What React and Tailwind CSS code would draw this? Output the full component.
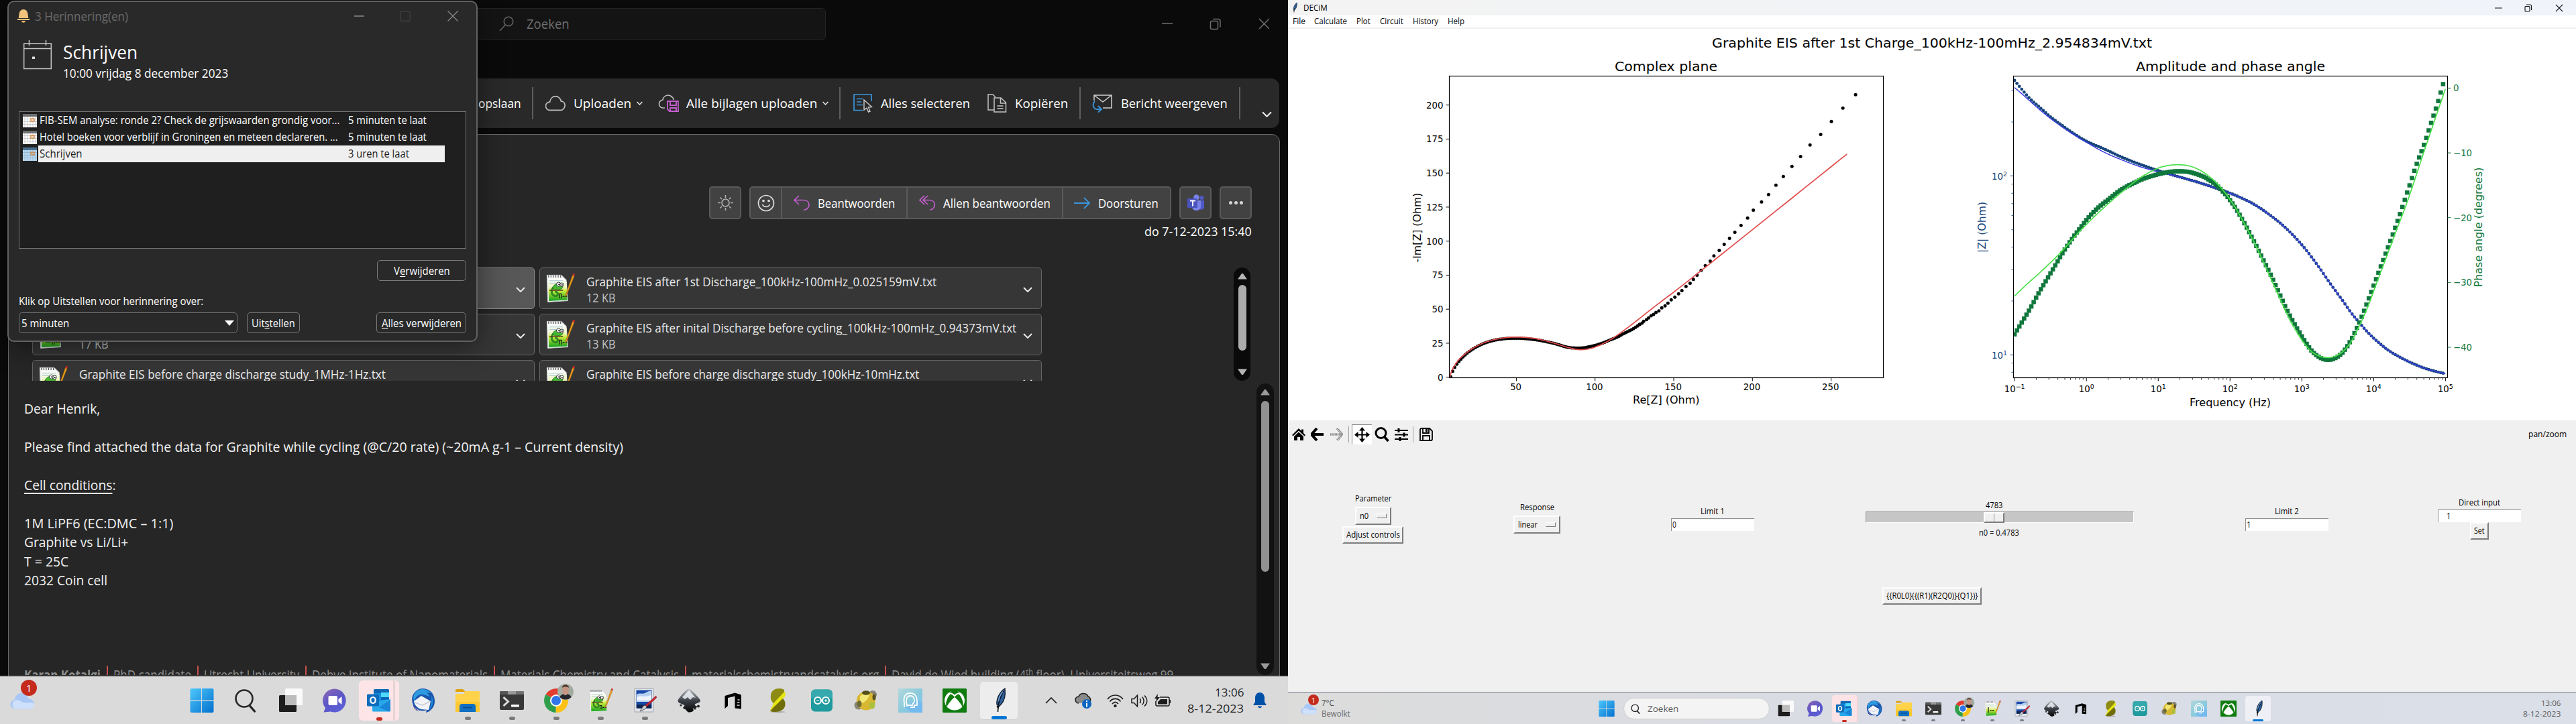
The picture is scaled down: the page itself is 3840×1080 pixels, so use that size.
import React, { useLayoutEffect, useRef } from "react";

/* Single line of text, condensed or widened to the given pixel width. */
function T({ w, className = "", children }) {
  const outer = useRef(null);
  const inner = useRef(null);
  useLayoutEffect(() => {
    const el = inner.current;
    el.style.transform = "none";
    const natural = el.offsetWidth;
    outer.current.style.width = w + "px";
    if (natural) el.style.transform = `scaleX(${w / natural})`;
  }, [w]);
  return (
    <span ref={outer} className={"inline-block shrink-0 whitespace-nowrap " + className}>
      <span ref={inner} className="inline-block origin-left">{children}</span>
    </span>
  );
}

/* ---------- curves ---------- */
function smooth(points, perSegment = 12) {
  const out = [];
  for (let i = 0; i < points.length - 1; i++) {
    const p0 = points[Math.max(0, i - 1)];
    const p1 = points[i];
    const p2 = points[i + 1];
    const p3 = points[Math.min(points.length - 1, i + 2)];
    for (let k = 0; k < perSegment; k++) {
      const t = k / perSegment;
      out.push([0, 1].map((d) =>
        0.5 * (2 * p1[d] + (p2[d] - p0[d]) * t + (2 * p0[d] - 5 * p1[d] + 4 * p2[d] - p3[d]) * t * t + (3 * p1[d] - p0[d] - 3 * p2[d] + p3[d]) * t * t * t)
      ));
    }
  }
  out.push(points[points.length - 1]);
  return out;
}
const SX = 960 / 1568;
const SY = 640 / 1568;
const place = (pts, ox) => pts.map(([x, y]) => [ox + x * SX, y * SY]);
const toPath = (pts) => "M" + pts.map(([x, y]) => x.toFixed(1) + " " + y.toFixed(1)).join("L");
function resampleX(pts, step) {
  const out = [];
  let i = 0;
  for (let x = pts[0][0]; x <= pts[pts.length - 1][0] + 0.01; x += step) {
    while (i < pts.length - 2 && pts[i + 1][0] < x) i++;
    const [x0, y0] = pts[i];
    const [x1, y1] = pts[i + 1];
    out.push([x, y0 + ((y1 - y0) * (x - x0)) / (x1 - x0 || 1)]);
  }
  return out;
}

const NYQ_SPARSE = [[1382,346],[1351,395],[1323,444],[1297,491],[1271,530],[1248,572],[1227,608],[1206,645],[1188,677],[1170,711],[1153,738],[1133,768],[1119,797],[1103,824],[1088,849],[1075,871],[1062,893],[1050,915],[1037,935],[1028,954],[1016,971],[1006,988],[996,1006],[987,1021],[979,1035],[969,1047],[959,1062],[951,1074],[942,1086],[933,1096],[925,1108],[918,1118],[910,1125],[903,1136],[896,1142],[890,1149],[884,1154],[878,1162],[873,1168],[866,1174],[862,1181],[856,1186]];
const NYQ_DENSE = [[396,1377],[400,1360],[408,1338],[420,1314],[440,1286],[465,1263],[490,1248],[520,1239],[556,1236],[590,1239],[620,1246],[650,1256],[680,1269],[700,1272],[720,1271],[740,1265],[760,1257],[780,1245],[800,1233],[820,1217],[840,1202],[856,1186]];
const NYQ_FIT = [[394,1380],[400,1350],[415,1316],[430,1295],[450,1273],[475,1254],[500,1242],[530,1234],[556,1232],[590,1235],[620,1243],[650,1255],[680,1269],[700,1276],[715,1278],[735,1274],[755,1264],[775,1250],[795,1232],[830,1194],[900,1112],[1000,996],[1361,563]];
const Z_TAIL = [[620,654],[660,672],[700,692],[726,706],[760,728],[790,752],[820,783],[850,818],[880,861],[910,912],[940,972],[970,1037],[1000,1099],[1020,1142],[1041,1180],[1060,1213],[1080,1242],[1110,1279],[1140,1306],[1170,1328],[1200,1346],[1225,1357],[1250,1366]];
const Z_DATA = [[201,294],[219,327],[240,363],[260,389],[285,423],[310,451],[340,483],[376,516],[420,545],[460,573],[500,597],[540,618],[580,637],...Z_TAIL];
const Z_FIT = [[201,320],[225,351],[260,398],[300,446],[340,487],[376,520],[420,557],[460,583],[500,606],[540,624],[580,639],...Z_TAIL];
const PH_DATA = [[201,1222],[220,1175],[240,1125],[260,1070],[280,1020],[300,970],[320,920],[340,875],[360,835],[380,797],[400,765],[430,728],[460,694],[490,670],[515,653],[550,637],[580,628],[605,626],[630,630],[660,645],[685,668],[705,695],[725,730],[745,775],[765,828],[785,885],[805,945],[825,1005],[845,1070],[865,1135],[885,1190],[905,1240],[925,1283],[945,1307],[962,1315],[980,1310],[1000,1288],[1020,1243],[1040,1180],[1060,1105],[1080,1025],[1100,945],[1120,865],[1140,780],[1160,690],[1180,600],[1200,520],[1215,450],[1232,373],[1243,314],[1250,283]];
const PH_FIT = [[201,1082],[230,1040],[260,1000],[300,943],[330,895],[360,845],[400,785],[440,730],[480,680],[515,642],[550,615],[575,605],[598,602],[625,606],[650,620],[675,645],[700,680],[720,718],[745,775],[785,888],[825,1018],[865,1150],[885,1205],[905,1252],[925,1286],[945,1302],[962,1307],[980,1303],[1000,1285],[1020,1250],[1040,1192],[1060,1125],[1080,1045],[1100,965],[1130,845],[1160,725],[1200,545],[1250,325]];

const nyqDense = place(resampleX(smooth(NYQ_DENSE), 5), 1920);
const nyqSparse = place(NYQ_SPARSE, 1920);
const zDots = place(resampleX(smooth(Z_DATA), 5.829), 2880);
const phDots = place(resampleX(smooth(PH_DATA), 5.829), 2880);

function Charts() {
  const decX = (d) => 3003.2 + (d + 1) * 107.03;
  const minorX = [];
  for (let d = -1; d < 5; d++) for (let m = 2; m < 10; m++) minorX.push(decX(d + Math.log10(m)));
  const zy = (v) => 529.4 - (Math.log10(v) - 1) * 267;
  return (
    <svg width="1920" height="584" viewBox="1920 43 1920 584" className="block shrink-0 bg-white" fontFamily="DejaVu Sans, sans-serif">
      <text x="2552" y="71" fontSize="20" textLength="656" lengthAdjust="spacingAndGlyphs">Graphite EIS after 1st Charge_100kHz-100mHz_2.954834mV.txt</text>
      <text x="2407" y="106" fontSize="20" textLength="153" lengthAdjust="spacingAndGlyphs">Complex plane</text>
      <text x="3184" y="106" fontSize="20" textLength="282" lengthAdjust="spacingAndGlyphs">Amplitude and phase angle</text>

      <clipPath id="axL"><rect x="2160" y="113" width="648" height="451" /></clipPath>
      <g clipPath="url(#axL)">
        {[...nyqDense, ...nyqSparse].map(([x, y], i) => <circle key={i} cx={x} cy={y} r="2.5" fill="#000" />)}
        <path d={toPath(place(smooth(NYQ_FIT), 1920))} fill="none" stroke="#e24a4a" strokeWidth="1.7" />
      </g>
      <rect x="2160.5" y="113.5" width="647" height="450" fill="none" stroke="#000" strokeWidth="1.2" />
      {[50, 100, 150, 200, 250].map((v, i) => (
        <g key={v}>
          <path d={`M${2260.4 + i * 117.3} 563.5v5`} stroke="#000" />
          <text x={2259.6 + i * 117.3} y="582" fontSize="13.3" textAnchor="middle">{v}</text>
        </g>
      ))}
      {[0, 25, 50, 75, 100, 125, 150, 175, 200].map((v, i) => (
        <g key={v}>
          <path d={`M2160.5 ${562.7 - i * 50.75}h-5`} stroke="#000" />
          <text x="2151.5" y={567.7 - i * 50.75} fontSize="13.3" textAnchor="end">{v}</text>
        </g>
      ))}
      <text x="2434" y="602" fontSize="16" textLength="99.5" lengthAdjust="spacingAndGlyphs">Re[Z] (Ohm)</text>
      <text transform="translate(2117.5 391.5) rotate(-90)" fontSize="16" textLength="104" lengthAdjust="spacingAndGlyphs">-Im[Z] (Ohm)</text>

      <clipPath id="axR"><rect x="3001" y="113" width="648" height="451" /></clipPath>
      <g clipPath="url(#axR)">
        {zDots.map(([x, y], i) => <circle key={i} cx={x} cy={y} r="2.4" fill="#17457c" />)}
        <path d={toPath(place(smooth(Z_FIT), 2880))} fill="none" stroke="#3c3ce0" strokeWidth="1.5" />
        {phDots.map(([x, y], i) => <rect key={i} x={x - 3.3} y={y - 3.2} width="6.6" height="6.4" fill="#10773c" />)}
        <path d={toPath(place(smooth(PH_FIT), 2880))} fill="none" stroke="#4be04b" strokeWidth="1.7" />
      </g>
      <rect x="3001.5" y="113.5" width="647" height="450" fill="none" stroke="#000" strokeWidth="1.2" />
      {minorX.map((x, i) => <path key={i} d={`M${x} 563.5v3`} stroke="#000" strokeWidth="0.8" />)}
      {[["−1", -1], ["0", 0], ["1", 1], ["2", 2], ["3", 3], ["4", 4], ["5", 5]].map(([s, d]) => (
        <g key={s}>
          <path d={`M${decX(d)} 563.5v5`} stroke="#000" />
          <text x={decX(d)} y="585" fontSize="13.3" textAnchor="middle">10<tspan dy="-5" fontSize="9.5">{s}</tspan></text>
        </g>
      ))}
      {[8, 9, 20, 30, 40, 50, 60, 70, 80, 90, 200, 300].map((v) => <path key={v} d={`M3001.5 ${zy(v)}h-3`} stroke="#17457c" strokeWidth="0.9" />)}
      {[[100, "2"], [10, "1"]].map(([v, s]) => (
        <g key={s}>
          <path d={`M3001.5 ${zy(v)}h-5`} stroke="#17457c" />
          <text x="2992" y={zy(v) + 6} fontSize="13.3" textAnchor="end" fill="#17457c">10<tspan dy="-5" fontSize="9.5">{s}</tspan></text>
        </g>
      ))}
      {[0, -10, -20, -30, -40].map((v, i) => (
        <g key={v}>
          <path d={`M3648.5 ${131.4 + i * 96.65}h5`} stroke="#10773c" />
          <text x="3657" y={136.4 + i * 96.65} fontSize="13.3" fill="#10773c">{v < 0 ? "−" + -v : v}</text>
        </g>
      ))}
      <text x="3264" y="606" fontSize="16" textLength="121" lengthAdjust="spacingAndGlyphs">Frequency (Hz)</text>
      <text transform="translate(2960 377) rotate(-90)" fontSize="16" textLength="76" lengthAdjust="spacingAndGlyphs" fill="#17457c">|Z| (Ohm)</text>
      <text transform="translate(3700 428.5) rotate(-90)" fontSize="16" textLength="179" lengthAdjust="spacingAndGlyphs" fill="#10773c">Phase angle (degrees)</text>
    </svg>
  );
}

/* ---------- taskbar icons ---------- */
const Svg = ({ s = 36, children, vb = "0 0 36 36" }) => (
  <svg width={s} height={s} viewBox={vb} className="block shrink-0 overflow-visible">{children}</svg>
);
const StartIcon = ({ s }) => (
  <Svg s={s}>
    <defs><linearGradient id="win" x1="0" y1="0" x2="1" y2="1"><stop offset="0" stopColor="#4cc8fb" /><stop offset="1" stopColor="#0470cf" /></linearGradient></defs>
    <path d="M2.500 0H17v17.300H.5V2a2 2 0 0 1 2-2zM18 0h15.500a2 2 0 0 1 2 2v15.300H18zM.5 18.500H17V36H2.500a2 2 0 0 1-2-2zM18 18.500h17.500V34a2 2 0 0 1-2 2H18z" fill="url(#win)" />
  </Svg>
);
const SearchIcon = ({ s, w = 2.6 }) => (
  <Svg s={s}><circle cx="15" cy="15" r="12.5" fill="none" stroke="#262626" strokeWidth={w} /><path d="M23 25.500l7.500 8.500" stroke="#262626" strokeWidth={w + 0.8} strokeLinecap="round" /></Svg>
);
const TaskView = ({ s }) => (
  <Svg s={s}><rect x="1" y="10" width="26" height="25" rx="1.500" fill="#1c1c1c" /><rect x="10" y="0" width="26" height="25" rx="1.500" fill="#fafafa" /><rect x="10" y="10" width="17" height="15" fill="#bcbcbc" /></Svg>
);
const ChatIcon = ({ s }) => (
  <Svg s={s}>
    <defs><linearGradient id="chat" x1="0" y1="0" x2="0.600" y2="1"><stop offset="0" stopColor="#8e68b4" /><stop offset=".6" stopColor="#5a56c8" /><stop offset="1" stopColor="#5b5fd6" /></linearGradient></defs>
    <path d="M18 .5a17 17.500 0 1 1-6 34L1.500 35.500 4 29A17.500 17.500 0 0 1 18 .5z" fill="url(#chat)" />
    <rect x="8.500" y="11" width="13.500" height="14" rx="2" fill="#fff" /><path d="M23.500 16l5-4v12l-5-4z" fill="#fff" />
  </Svg>
);
const OutlookIcon = ({ s }) => (
  <Svg s={s}>
    <rect x="10" y="1" width="23" height="18" rx="1.500" fill="#1066b5" /><path d="M21 6h12v7H21z" fill="#50d9ff" /><path d="M10 7h11v10H10z" fill="#1490df" /><path d="M21 13h12v6H21z" fill="#0364b8" />
    <path d="M8 19l27-3v17a1.500 1.500 0 0 1-1.500 1.500H9.500A1.500 1.500 0 0 1 8 33z" fill="#28a8ea" /><path d="M35 17L18 28l15 6.500 2-1.500z" fill="#1a86d9" />
    <rect x="0" y="8.500" width="18" height="18" rx="1.500" fill="#0f6cbd" /><ellipse cx="9" cy="17.500" rx="3.700" ry="4.500" fill="none" stroke="#fff" strokeWidth="2.200" />
  </Svg>
);
const Thunderbird = ({ s }) => (
  <Svg s={s}>
    <path d="M7 4C14-3 27 0 32 8c5 8 4 20-4 25-2 2-4 2-6 3l1-4C14 36 4 30 2 22 0 14 2 8 7 4z" fill="#1a56ad" /><path d="M8 4c8-6 17-2 22 3l-7-1 5 6-10-3C11 8 6 12 5 20 2 14 3 8 8 4z" fill="#2e9ae0" /><path d="M30 10c4 7 3 16-3 21 3-7 4-14 3-21z" fill="#1f8ad8" />
    <path d="M4 19l11-8 14 8-3 13-11-1c-6-2-10-6-11-12z" fill="#f2f3f7" /><path d="M5 21l12 4 11-6" fill="none" stroke="#b8c0d4" strokeWidth="1.200" /><path d="M3 24c2 5 5 8 9 10-5-1-9-5-9-10z" fill="#3b1f87" />
  </Svg>
);
const Explorer = ({ s }) => (
  <Svg s={s}>
    <path d="M0 3a2 2 0 0 1 2-2h9l4 4H0z" fill="#e0a106" /><path d="M0 8h12l3-4h20a1 1 0 0 1 1 1v29a1 1 0 0 1-1 1H1a1 1 0 0 1-1-1z" fill="#ffd24a" /><path d="M0 20h36v14a1 1 0 0 1-1 1H1a1 1 0 0 1-1-1z" fill="#fcc730" />
    <path d="M6 35V27a4 4 0 0 1 4-4h16a4 4 0 0 1 4 4v8z" fill="#0f6fc4" /><path d="M11 28.500h14" stroke="#0a4a8a" strokeWidth="1.800" />
  </Svg>
);
const Terminal = ({ s }) => (
  <Svg s={s}><rect x="0" y="4" width="36" height="28" rx="2" fill="#383838" /><path d="M0 8.500V6a2 2 0 0 1 2-2h10v5H0z" fill="#555" /><path d="M12 4h12v5H12z" fill="#999" /><path d="M24 4h10a2 2 0 0 1 2 2v3H24z" fill="#727272" /><path d="M5.500 13l7 6.500-7 6.500" stroke="#dcdcdc" strokeWidth="3" fill="none" /><rect x="17" y="24" width="12" height="3.500" rx="1" fill="#fff" /></Svg>
);
const Chrome = ({ s }) => (
  <Svg s={s}>
    <path d="M18 18L2.600 8.800A18 18 0 0 1 33.500 8.800z" fill="#e23c2f" /><path d="M18 18l15.500-9.200A18 18 0 0 1 17.500 36z" fill="#fbc116" /><path d="M18 18l-.5 18A18 18 0 0 1 2.600 8.800z" fill="#2f9e4a" />
    <circle cx="18" cy="18" r="9" fill="#fff" /><circle cx="18" cy="18" r="7" fill="#2f76ea" />
    <ellipse cx="32" cy="5" rx="12" ry="12" fill="#a3aaa0" /><path d="M23.500 13c1-3.500 4-5 8.500-5s7.500 1.500 8.500 5a12 12 0 0 1-17 0z" fill="#24262b" /><ellipse cx="32" cy="3" rx="4.800" ry="7.200" fill="#c69583" /><path d="M27-1c0-6 10-6 10 0-2-2-8-2-10 0z" fill="#4b3428" />
  </Svg>
);
const Npp = ({ s, code }) => (
  <Svg s={s}>
    <defs><linearGradient id="npp" x1="0" y1="0" x2="0" y2="1"><stop offset="0" stopColor="#fdfdfd" /><stop offset=".38" stopColor="#eef6c8" /><stop offset=".55" stopColor="#c8ec3c" /><stop offset="1" stopColor="#12a01e" /></linearGradient></defs>
    <path d="M2 2h18l6 6 2 26-25 1.500z" fill="#f4f6f6" stroke="#cfd3d3" strokeWidth=".8" /><path d="M3.500 6h19l4 5 .8 22-23 1.300z" fill="url(#npp)" />
    <path d="M4 2v3M7 2v3M10 2v3M13 2v3M16 2v3M19 2v3" stroke="#555" strokeWidth="1" /><path d="M5 9h17M5 12h18" stroke="#9fc4d8" strokeWidth=".8" />
    {code ? <path d="M9 15v12M13 22h3M18 22h3" stroke="#111" strokeWidth="1.800" /> : (
      <g>
        <path d="M16 19c-1-3-7-3-8 2-1 5 3 8 6 7 3-2 1-6-2-5" fill="none" stroke="#2f8a22" strokeWidth="2.600" /><path d="M9 17c3-5 9-6 12-2 2 3-1 5-5 5s-6 0-7-3z" fill="#45b832" stroke="#1c5c14" strokeWidth=".6" /><circle cx="16.500" cy="13.500" r="2.600" fill="#fff" stroke="#111" strokeWidth=".7" /><circle cx="20.500" cy="14" r="2.300" fill="#fff" stroke="#111" strokeWidth=".7" /><circle cx="17" cy="13.700" r=".9" /><circle cx="20.800" cy="14.200" r=".8" />
        <path d="M5 21h17" stroke="#58381e" strokeWidth="1.200" fill="none" /><path d="M17.500 31v-5.500h2.500V31M21.500 28.500h2.500M25 28.500h2" stroke="#111" strokeWidth="1" fill="none" />
      </g>
    )}
    <path d="M34 2L25.500 26l-.8 3 2-2.500L36 3z" fill="#f2a81d" stroke="#a5650e" strokeWidth=".6" /><path d="M33.600 2.500L36 3.200 36.800 1c.2-.8-2-1.500-2.400-.7z" fill="#c22a2a" />
  </Svg>
);
const PaintNet = ({ s }) => (
  <Svg s={s}>
    <rect x="3" y="0" width="28" height="35" rx="1" fill="#e4e6ea" stroke="#9aa0a8" /><rect x="5.500" y="2.500" width="23" height="27" fill="#1a4aa8" /><path d="M6 9c5-3 8 0 12-2s7-4 10-3v16H6z" fill="#b7d0f0" /><path d="M6 13c6-4 14 2 22-4v9H6z" fill="#eef4fc" /><path d="M6 24h22v5.500H6z" fill="#0d2450" />
    <path d="M35 11L19 25l-3 4 4-1 15.500-14z" fill="#cf2430" stroke="#7d1018" strokeWidth=".6" /><path d="M19 25l-3 1-5 8 7-3 3-3z" fill="#c9ccd2" stroke="#444" strokeWidth=".8" />
  </Svg>
);
const Inkscape = ({ s }) => (
  <Svg s={s}>
    <defs><linearGradient id="ink" x1="0" y1="0" x2="0" y2="1"><stop offset="0" stopColor="#c4c8cf" /><stop offset=".5" stopColor="#3d4148" /><stop offset="1" stopColor="#050505" /></linearGradient></defs>
    <path d="M18 0c2 0 15 14 16.500 16.500 1.500 2.500-.5 4-3 5-4 1.500-6 2-4 4l3 1.500c0 2-5 2-7 3 3 2 1 5-4 5.500-4 .5-5-3-7-4.500-4-1-4-3-2-3.500l1-2.500c-3-2-10-3-10-6.500C1.500 15 15 0 18 0z" fill="url(#ink)" />
    <path d="M18 2.500L8 13l4 3 4-3 4 4 4-4 4 1z" fill="#eef1f5" opacity=".85" /><circle cx="32" cy="26.500" r="2" fill="#222" /><circle cx="27" cy="30" r="1.500" fill="#222" /><circle cx="6" cy="25" r="1.600" fill="#222" />
  </Svg>
);
const NIcon = ({ s }) => (
  <Svg s={s}><path d="M5.500 11l15-4.500v5l-10.500 2.500v12l-4.500 4z" fill="#000" /><path d="M20.500 6.500l9.500 3v21l-9.500-1z" fill="#000" /><path d="M24.500 17h3M24 21h3.500M23.500 25h4" stroke="#d9d9d9" strokeWidth="1.300" /></Svg>
);
const Scilab = ({ s }) => (
  <Svg s={s}>
    <ellipse cx="19" cy="35" rx="11" ry="1.200" fill="#999" opacity=".7" /><path d="M28 2C21-2 9 0 8 10c-.6 7 1 9 5 13l15-17z" fill="#8d8b12" /><path d="M28 7L7 34c8 2 19 1 22-7 2-8-2-11-5-14z" fill="#6f6d0a" /><path d="M29 4L13 21l-7 13L30 11z" fill="#e6e612" />
  </Svg>
);
const Arduino = ({ s }) => (
  <Svg s={s}><rect x="2" y="1.500" width="32" height="33" rx="6" fill="#1f9a9e" /><path d="M2 14V7.500a6 6 0 0 1 6-6h20a6 6 0 0 1 6 6V14z" fill="#35a9ad" /><g fill="none" stroke="#fff" strokeWidth="2.200"><circle cx="12" cy="18" r="5" /><circle cx="24" cy="18" r="5" /></g><path d="M10 18h4M22 18h4M24 16v4" stroke="#fff" strokeWidth="1.200" /></Svg>
);
const Ball = ({ s }) => (
  <Svg s={s}>
    <circle cx="7" cy="25" r="6.500" fill="#8a8577" /><circle cx="28" cy="9" r="6" fill="#8a8577" /><circle cx="18" cy="18.500" r="14" fill="#d8b832" /><path d="M9 12c3-5 11-6 14-3-1 6-6 12-14 14z" fill="#f3e774" /><ellipse cx="18" cy="6.500" rx="6" ry="3.200" fill="#54521a" /><ellipse cx="8" cy="23" rx="3.500" ry="5" fill="#6e6a36" /><ellipse cx="27" cy="25" rx="4.500" ry="5.500" fill="#aebf3c" /><ellipse cx="30" cy="13" rx="2.500" ry="4.500" fill="#57521e" />
  </Svg>
);
const HeadIcon = ({ s }) => (
  <Svg s={s}>
    <defs><linearGradient id="hd" x1="0" y1="0" x2="1" y2="1"><stop offset="0" stopColor="#b3d8dd" /><stop offset=".5" stopColor="#8ccbdc" /><stop offset="1" stopColor="#79bff4" /></linearGradient></defs>
    <rect width="36" height="36" fill="url(#hd)" /><path d="M10 28l10 8h16V22l-8-6z" fill="#6bb2f0" opacity=".55" /><g fill="none" stroke="#fff" strokeWidth="1.800"><path d="M9 28v-6c-2-10 2-15 9-15s10 5 10 11v7h-4v3h-6" /><path d="M13 26c-2-9-1-15 5-15s6 5 6 8-3 3-3 6h-6z" /></g>
  </Svg>
);
const Xbox = ({ s }) => (
  <Svg s={s}><rect width="36" height="36" rx="1.500" fill="#107c10" /><ellipse cx="18" cy="18" rx="15" ry="14.500" fill="#fff" /><path d="M8 6.500C12 5 16 8 18 9.500 20 8 24 5 28 6.500L18 2z" fill="#107c10" /><path d="M11.500 8.500C6 15 4 23 6 28c3-6 8-12 12-15 4 3 9 9 12 15 2-5 0-13-5.500-19.500-2 0-5 2-6.500 4.500-1.500-2.500-4.500-4.500-6.500-4.500z" fill="#107c10" /></Svg>
);
const Feather = ({ s }) => (
  <Svg s={s}><path d="M27 0c1 8 0 18-6 24l-3 3-3-3c-1-8 4-19 12-24z" fill="#2d5f9e" stroke="#17202c" strokeWidth="1.300" /><path d="M25 4c-4 8-7 14-8 22l-.5 9" fill="none" stroke="#10151c" strokeWidth="1.600" /><path d="M24 5c-4 4-6 10-6.500 14" stroke="#7ea9dc" strokeWidth="1.400" fill="none" /><path d="M14.500 26h4l-1.500 6z" fill="#111" /></Svg>
);
const Weather = ({ s }) => (
  <Svg s={s} vb="0 0 36 27"><path d="M8 26a7 7 0 0 1-1-14C8 5 15 0 21 3c4 1 6 5 6 8 5 0 9 3 9 8s-4 7-8 7z" fill="#a9c8f6" /><path d="M8 26a7 7 0 0 1 0-13c8-1 8 4 14 4s14-2 14 3c-.5 4-4 6-8 6z" fill="#cfe0fb" /></Svg>
);

const APPS = [
  [TaskView], [ChatIcon], [OutlookIcon, "alert"], [Thunderbird], [Explorer, "dot"], [Terminal, "dot"], [Chrome, "dot"], [Npp, "dot"], [PaintNet, "dot"],
  [Inkscape], [NIcon], [Scilab], [Arduino], [Ball], [HeadIcon], [Xbox], [Feather, "active"],
];

function TaskSlot({ Icon, state, small, code }) {
  const size = small ? 24 : 36;
  const box =
    state === "alert" ? (small ? "w-[39px] h-[40px] rounded-[4px] bg-[#fde3e5] border-r-2 border-[#f4d3d6]" : "w-[60px] h-[60px] rounded-[6px] bg-[#fde5e7]")
    : state === "active" ? (small ? "w-[38px] h-[38px] rounded-[4px] bg-[#eef0f5]" : "w-[56px] h-[57px] rounded-[5px] bg-[#ededed] border-b border-[#cfcfcf]")
    : small ? "w-[38px] h-[38px]" : "w-[56px] h-[57px]";
  const bar =
    state === "alert" ? (small ? "w-[7px] bg-[#c42b1c]" : "w-[9px] bg-[#c42b1c]")
    : state === "active" ? (small ? "w-[16px] bg-[#0078d7]" : "w-[23px] bg-[#0078d7]")
    : state === "dot" ? (small ? "w-[6px] bg-[#7c8088]" : "w-[9px] bg-[#7a7a7a]") : "w-0";
  return (
    <div className={(small ? "w-[44px]" : "w-[66px]") + " flex shrink-0 justify-center"}>
      <div className={box + " relative flex items-center justify-center"}>
        <Icon s={size} code={code} />
        {state === "alert" && !small && <span className="absolute top-0 right-[6px] h-full w-[3px] rounded-r bg-[#e6d4d5]" />}
        <span className={bar + " absolute bottom-0 rounded-full " + (small ? "h-[3px]" : "h-[5px]")} />
      </div>
    </div>
  );
}

/* ---------- reminder dialog ---------- */
const MiniCal = ({ sel }) => (
  <svg width="21" height="20" viewBox="0 0 21 20" className="block shrink-0">
    <rect width="21" height="20" fill={sel ? "#b9d9f2" : "#fff"} /><rect width="21" height="4" fill={sel ? "#4a7090" : "#6e6e6e"} />
    <path d="M3 4v16M7 4v16M11 4v16M15 4v16M19 4v16M0 7.500h21M0 11.500h21M0 15.500h21" stroke={sel ? "#8fb2cc" : "#c0c0c0"} strokeWidth=".8" />
    <rect x="12" y="7" width="5" height="4" fill="none" stroke="#d9771f" strokeWidth="1.200" />
  </svg>
);

function Reminder() {
  return (
    <div className="absolute left-[11px] top-[1px] flex h-[509px] w-[701px] flex-col overflow-hidden rounded-[10px] border-2 border-[#626262] bg-[#292929] text-white shadow-[0_8px_40px_rgba(0,0,0,0.450)]">
      <div className="flex h-[42px] items-center pl-[12px]">
        <svg width="20" height="20" viewBox="0 0 20 20" className="block">
          <path d="M10 0c4 0 6 3 6.500 7l.8 6 2 2v1H.7v-1l2-2 .8-6C4 3 6 0 10 0z" fill="#f3c27b" /><path d="M2 13.500h16" stroke="#292929" /><path d="M7 17h6c0 3.500-6 3.500-6 0z" fill="#f0b866" />
        </svg>
        <T w={139} className="ml-[7px] text-[18px] leading-[24px] text-[#6b6b6b]">3 Herinnering(en)</T>
        <svg width="16" height="16" viewBox="0 0 16 16" className="ml-[337px] block"><path d="M0 8h15" stroke="#8a8a8a" strokeWidth="1.500" /></svg>
        <svg width="16" height="16" viewBox="0 0 16 16" className="ml-[52px] block"><rect x=".7" y=".7" width="14.500" height="14.500" rx="2" fill="none" stroke="#3f3f3f" strokeWidth="1.500" /></svg>
        <svg width="16" height="16" viewBox="0 0 16 16" className="ml-[55px] block"><path d="M.5.5l15 15M15.500.5l-15 15" stroke="#8a8a8a" strokeWidth="1.300" /></svg>
      </div>
      <div className="mt-[14px] flex h-[107px] pl-[22px]">
        <svg width="42" height="44" viewBox="0 0 42 44" className="mt-[1px] block">
          <path d="M.7 5h40.600v37.500H.7zM.7 12.500h40.600" fill="none" stroke="#c8c8c8" strokeWidth="1.500" /><path d="M8.500 0v8M33.500 0v8" stroke="#c8c8c8" strokeWidth="1.500" /><rect x="13" y="24.500" width="4" height="3.500" fill="#ddd" />
        </svg>
        <div className="ml-[17px] flex flex-col items-start">
          <T w={111} className="mt-[2px] text-[27px] leading-[34px]">Schrijven</T>
          <T w={246} className="mt-[2px] text-[18px] leading-[24px]">10:00 vrijdag 8 december 2023</T>
        </div>
      </div>
      <div className="ml-[15px] h-[205px] w-[667px] border border-[#747474] bg-[#1f1f1f] text-[15.500px] leading-[25px]">
        {[["FIB-SEM analyse: ronde 2? Check de grijswaarden grondig voor...", 447, "5 minuten te laat", 117], ["Hotel boeken voor verblijf in Groningen en meteen declareren. ...", 445, "5 minuten te laat", 117], ["Schrijven", 64, "3 uren te laat", 91]].map(([a, aw, b, bw], i) => (
          <div key={i} className="flex h-[25px] items-center pl-[5px]">
            <MiniCal sel={i === 2} />
            <div className={"ml-[2px] flex w-[606px] pl-[2px] " + (i === 2 ? "bg-[#efefef] text-[#1a1a1a]" : "")}>
              <div className="w-[460px]"><T w={aw}>{a}</T></div>
              <T w={bw}>{b}</T>
            </div>
          </div>
        ))}
      </div>
      <div className="mt-[17px] flex justify-end pr-[15px]">
        <div className="flex h-[31px] w-[133px] items-center justify-center rounded-[5px] border border-[#7a7a7a] text-[16px]"><T w={84}>V<u className="underline-offset-2">e</u>rwijderen</T></div>
      </div>
      <div className="mt-[18px] pl-[15px] text-[16px] leading-[24px]"><T w={275}>Klik op Uitstellen voor herinnering over:</T></div>
      <div className="mt-[5px] flex pl-[15px] text-[16px]">
        <div className="flex h-[31px] w-[326px] items-center justify-between rounded-[5px] border border-[#747474] pr-[4px] pl-[3px]">
          <T w={71}>5 minuten</T>
          <svg width="14" height="8" viewBox="0 0 14 8"><path d="M0 0h14L7 8z" fill="#fff" /></svg>
        </div>
        <div className="ml-[14px] flex h-[31px] w-[79px] items-center justify-center rounded-[5px] border border-[#7a7a7a]"><T w={65}>Uit<u className="underline-offset-2">s</u>tellen</T></div>
        <div className="ml-[114px] flex h-[31px] w-[134px] items-center justify-center rounded-[5px] border border-[#7a7a7a]"><T w={119}><u className="underline-offset-2">A</u>lles verwijderen</T></div>
      </div>
    </div>
  );
}

/* ---------- mail window ---------- */
const Chev = ({ w = 14, h = 8, sw = 2 }) => (
  <svg width={w} height={h} viewBox="0 0 14 8" className="block shrink-0"><path d="M1 1l6 6 6-6" fill="none" stroke="#e8e8e8" strokeWidth={sw} /></svg>
);
const Cloud = <path d="M9 24H7A6.500 6.500 0 0 1 7 11C8 5 12 2 16 2s8 3 9 8c4 0 6 3 6 6.500S28 24 25 24z" fill="none" stroke="#bdbdbd" strokeWidth="1.800" />;

function Card({ name, w, size, sizeW = 44, hot, h = "h-[62px]", top = "mt-[7px]" }) {
  return (
    <div className={"flex w-[749px] shrink-0 rounded-[5px] border pl-[8px] " + h + " " + top + (hot ? " border-[#8c8c8c] bg-gradient-to-r from-[#3d3d3d] to-[#585858]" : " border-[#666] bg-[#363636]")}>
      <div className="mt-[8px]"><Npp s={43} /></div>
      <div className="ml-[18px] flex w-[640px] flex-col items-start pt-[8px] text-[17.500px]">
        <div className="h-[24px] leading-[24px] text-[#ececec]">{name && <T w={w}>{name}</T>}</div>
        {size && <T w={sizeW} className="leading-[24px] text-[#c4c4c4]">{size}</T>}
      </div>
      <div className="mt-[28px] ml-[11px]"><Chev /></div>
    </div>
  );
}

function Scroll({ h, thumb, dark }) {
  return (
    <div className={"flex shrink-0 flex-col items-center rounded-full " + (dark ? "w-[25px] bg-[#0a0a0a]" : "w-[26px] bg-[#121212]") + " " + h}>
      <svg width="14" height="10" viewBox="0 0 14 10" className="mt-[8px] block"><path d="M6 1h2l6 8.500H0z" fill={dark ? "#b4b4b4" : "#9a9a9a"} /></svg>
      <div className={"mt-[8px] w-[12px] rounded-full " + thumb + " " + (dark ? "bg-[#acacac]" : "bg-[#919191]")} />
      <div className="grow" />
      <svg width="14" height="10" viewBox="0 0 14 10" className="mb-[8px] block"><path d="M6 9h2l6-8.500H0z" fill={dark ? "#b4b4b4" : "#9a9a9a"} /></svg>
    </div>
  );
}

const Bar = ({ className }) => <div className={"h-[48px] w-[2px] shrink-0 bg-[#5e5e5e] " + className} />;

function MailWindow() {
  return (
    <div className="flex h-[1008px] flex-col overflow-hidden bg-[#0a0a0a] text-white">
      <div className="flex h-[117px] shrink-0 items-start">
        <div className="mt-[12px] ml-[700px] flex h-[48px] w-[531px] items-center rounded-[6px] border border-[#242424] bg-[#141414] pl-[43px]">
          <svg width="23" height="24" viewBox="0 0 23 24"><circle cx="14" cy="8" r="6.800" fill="none" stroke="#666" strokeWidth="1.500" /><path d="M9.500 13L1 22" stroke="#666" strokeWidth="1.500" /></svg>
          <T w={64} className="ml-[18px] text-[20px] text-[#6e6e6e]">Zoeken</T>
        </div>
        <svg width="160" height="18" viewBox="0 0 160 18" className="mt-[27px] ml-[501px]" fill="none" stroke="#6f6f6f" strokeWidth="1.500">
          <path d="M0 8h16M145 1l15 15M160 1l-15 15" /><rect x="72.500" y="4.500" width="11" height="12" rx="2" /><path d="M76 1.500h8a3 3 0 0 1 3 3v9" />
        </svg>
      </div>
      <div className="ml-[12px] flex h-[74px] w-[1895px] shrink-0 items-center self-start overflow-hidden rounded-r-[12px] bg-[#292929] pl-[701px] text-[19px]">
        <T w={64}>opslaan</T>
        <Bar className="ml-[16px]" />
        <svg width="31" height="26" viewBox="0 0 33 26" className="ml-[18px] mr-[11px] block">{Cloud}</svg>
        <T w={86}>Uploaden</T>
        <div className="ml-[8px]"><Chev w={9} h={6} sw={2.4} /></div>
        <svg width="33" height="28" viewBox="0 0 33 28" className="ml-[23px] block">
          <path d="M10 21H8a6 6 0 0 1-1-12C8 4 12 2 15 2s8 3 8 7" fill="none" stroke="#bdbdbd" strokeWidth="1.600" /><path d="M14 11h16v15H17l-3-3zM18 11v6h9v-6M18 26v-5h9v5" fill="none" stroke="#c65fd0" strokeWidth="1.800" />
        </svg>
        <T w={195} className="ml-[9px]">Alle bijlagen uploaden</T>
        <div className="ml-[8px]"><Chev w={9} h={6} sw={2.4} /></div>
        <Bar className="ml-[16px]" />
        <svg width="29" height="28" viewBox="0 0 29 28" className="ml-[19px] block">
          <path d="M14 24.500H1V1h26v10" fill="none" stroke="#3a96dd" strokeWidth="1.700" /><path d="M5 7.500h9M5 12h7M5 16.500h9" stroke="#3a96dd" strokeWidth="1.500" /><path d="M16 9v15l4-3 2.500 6 2.500-1-2.500-6 5-.5z" fill="#292929" stroke="#cfcfcf" strokeWidth="1.400" />
        </svg>
        <T w={133} className="ml-[12px]">Alles selecteren</T>
        <svg width="29" height="28" viewBox="0 0 29 28" className="ml-[26px] block" fill="none" stroke="#c4c4c4" strokeWidth="1.500">
          <path d="M10 24H1V1h7l4 4" /><path d="M10 6h10l7.500 7v14H10zM19.500 6v8h8M14.500 18h9M14.500 22h9" />
        </svg>
        <T w={79} className="ml-[12px]">Kopiëren</T>
        <Bar className="ml-[17px]" />
        <svg width="31" height="28" viewBox="0 0 31 28" className="ml-[17px] block">
          <path d="M3 10V2h26v19H16M3 2l13 10L29 2" fill="none" stroke="#cfcfcf" strokeWidth="1.500" /><path d="M4 11c-4 4-3 11 3 12h7M9 18l5 5-5 4.500" fill="none" stroke="#3a96dd" strokeWidth="1.900" />
        </svg>
        <T w={159} className="ml-[12px]">Bericht weergeven</T>
        <Bar className="ml-[17px]" />
        <div className="mt-[32px] ml-[32px]"><Chev w={15} h={9} /></div>
      </div>

      <div className="mt-[9px] ml-[12px] flex h-[820px] w-[1896px] shrink-0 flex-col rounded-t-[12px] border border-[#6a6a6a] bg-[#262626]">
        <div className="mt-[77px] flex h-[49px] shrink-0 justify-end pr-[41px] text-[18px]">
          <div className="flex w-[48px] items-center justify-center rounded-[5px] border-2 border-[#5a5a5a] bg-[#424242]">
            <svg width="25" height="25" viewBox="0 0 25 25" fill="none" stroke="#b4b4b4" strokeWidth="1.500"><circle cx="12.500" cy="12.500" r="5.500" /><path d="M12.500 1v4M12.500 20v4M1 12.500h4M20 12.500h4M4.500 4.500l2.500 2.500M18 18l2.500 2.500M20.500 4.500L18 7M7 18l-2.500 2.500" /></svg>
          </div>
          <div className="ml-[12px] flex w-[629px] rounded-[5px] border-2 border-[#5a5a5a] bg-[#424242]">
            <div className="flex w-[47px] items-center justify-center border-r-2 border-[#5a5a5a]">
              <svg width="26" height="26" viewBox="0 0 26 26" fill="none" stroke="#dcdcdc" strokeWidth="1.700"><circle cx="13" cy="13" r="11.500" /><path d="M7.500 15c2 4.500 9 4.500 11 0" /><circle cx="9" cy="9.500" r="1" fill="#dcdcdc" /><circle cx="17" cy="9.500" r="1" fill="#dcdcdc" /></svg>
            </div>
            <div className="flex w-[187px] items-center border-r-2 border-[#5a5a5a] pl-[16px]">
              <svg width="26" height="24" viewBox="0 0 26 24" fill="none" stroke="#c65fd0" strokeWidth="1.700"><path d="M9 1L2 7.500 9 14M2 7.500h13c12 0 12 13 1 15" /></svg>
              <T w={115} className="ml-[11px] pt-[2px]">Beantwoorden</T>
            </div>
            <div className="flex w-[232px] items-center border-r-2 border-[#5a5a5a] pl-[16px]">
              <svg width="26" height="24" viewBox="0 0 26 24" fill="none" stroke="#c65fd0" strokeWidth="1.700"><path d="M9 1L2 7.500 9 14M14 1L7 7.500 14 14M7 7.500h9c11 0 11 13 1 15" /></svg>
              <T w={160} className="ml-[11px] pt-[2px]">Allen beantwoorden</T>
            </div>
            <div className="flex items-center pl-[16px]">
              <svg width="24" height="18" viewBox="0 0 24 18" fill="none" stroke="#3a96dd" strokeWidth="1.800"><path d="M0 9h22M15 1l8 8-8 8" /></svg>
              <T w={90} className="ml-[12px] pt-[2px]">Doorsturen</T>
            </div>
          </div>
          <div className="ml-[12px] flex w-[48px] items-center justify-center rounded-[5px] border-2 border-[#5a5a5a] bg-[#424242]">
            <svg width="25" height="25" viewBox="0 0 25 25"><circle cx="21.500" cy="5" r="3" fill="#5059c9" /><path d="M17 9h8v8a4 4 0 0 1-8 3z" fill="#5059c9" /><circle cx="13.500" cy="4.500" r="4.300" fill="#7b83eb" /><path d="M7 9h13v9c0 8-13 8-13 0z" fill="#7b83eb" /><rect x="0" y="6" width="15" height="14" rx="1.500" fill="#4b53bc" /><path d="M4 9.500h8M8 9.500v8" stroke="#fff" strokeWidth="1.900" /></svg>
          </div>
          <div className="ml-[12px] flex w-[48px] items-center justify-center gap-[3px] rounded-[5px] border-2 border-[#5a5a5a] bg-[#424242]">
            <i className="h-[5px] w-[5px] rounded-full bg-[#d6d6d6]" /><i className="h-[5px] w-[5px] rounded-full bg-[#d6d6d6]" /><i className="h-[5px] w-[5px] rounded-full bg-[#d6d6d6]" />
          </div>
        </div>
        <div className="mt-[5px] flex h-[26px] shrink-0 justify-end pr-[41px] text-[18px] leading-[26px]"><T w={160}>do 7-12-2023 15:40</T></div>

        <div className="mt-[41px] flex h-[169px] shrink-0 pl-[35px]">
          <div className="flex h-[169px] w-[1791px] flex-col overflow-hidden">
            <div className="flex gap-[7px]">
              <Card top="mt-0" hot />
              <Card top="mt-0" w={522} name="Graphite EIS after 1st Discharge_100kHz-100mHz_0.025159mV.txt" size="12 KB" />
            </div>
            <div className="flex gap-[7px]">
              <Card size="17 KB" />
              <Card w={641} name="Graphite EIS after inital Discharge before cycling_100kHz-100mHz_0.94373mV.txt" size="13 KB" />
            </div>
            <div className="flex gap-[7px]">
              <Card w={457} name="Graphite EIS before charge discharge study_1MHz-1Hz.txt" />
              <Card w={496} name="Graphite EIS before charge discharge study_100kHz-10mHz.txt" />
            </div>
          </div>
          <Scroll dark h="h-[169px]" thumb="h-[98px]" />
        </div>

        <div className="mt-[4px] flex h-[435px] shrink-0 overflow-hidden pl-[23px]">
          <div className="flex w-[1837px] flex-col items-start pt-[23.500px] text-[20px] leading-[28.500px] text-[#f2f2f2]">
            <T w={113}>Dear Henrik,</T>
            <T w={893} className="mt-[28.500px]">Please find attached the data for Graphite while cycling (@C/20 rate) (~20mA g-1 – Current density)</T>
            <T w={137} className="mt-[28.500px]"><u className="underline-offset-4">Cell conditions</u>:</T>
            <T w={222} className="mt-[28.500px]">1M LiPF6 (EC:DMC – 1:1)</T>
            <T w={155}>Graphite vs Li/Li+</T>
            <T w={66}>T = 25C</T>
            <T w={124}>2032 Coin cell</T>
            <div className="mt-[112px] flex shrink-0 text-[#8f8f8f]">
              {[["Karan Kotalgi", 114, "font-bold"], ["PhD candidate", 116, ""], ["Utrecht University", 142, ""], ["Debye Institute of Nanomaterials", 262, ""], ["Materials Chemistry and Catalysis", 266, ""], ["materialschemistryandcatalysis.org", 279, ""]].map(([t, w, c]) => (
                <div key={t} className="flex"><T w={w} className={c}>{t}</T><span className="mx-[8.500px] h-[28px] w-[2px] bg-[#c9514f]" /></div>
              ))}
              <T w={420}>David de Wied building (4<sup className="text-[13px]">th</sup> floor), Universiteitsweg 99</T>
            </div>
          </div>
          <Scroll h="h-[435px]" thumb="h-[255px]" />
        </div>
      </div>
    </div>
  );
}

function LeftTaskbar() {
  return (
    <div className="flex h-[72px] items-center border-t-2 border-[#b0b0b0] bg-[#dadada]">
      <div className="relative ml-[15px] w-[36px]">
        <Weather s={36} />
        <span className="absolute -top-[13px] left-[16px] flex h-[24px] w-[24px] items-center justify-center rounded-full bg-[#c42b1c] text-[15px] leading-none text-white">1</span>
      </div>
      <div className="ml-[217px] flex items-center">
        <TaskSlot Icon={StartIcon} /><TaskSlot Icon={SearchIcon} />
        {APPS.map(([Icon, state], i) => <TaskSlot key={i} Icon={Icon} state={state} />)}
      </div>
      <svg width="18" height="10" viewBox="0 0 18 10" className="ml-[36px]"><path d="M1 9l8-8 8 8" fill="none" stroke="#1c1c1c" strokeWidth="1.700" /></svg>
      <svg width="26" height="24" viewBox="0 0 26 24" className="ml-[26px] overflow-visible"><path d="M6 16a5 5 0 0 1 0-10c2-6 12-6 14 0 4 1 4 6 3 8" fill="#8a8a8a" stroke="#222" strokeWidth="1.600" /><circle cx="18" cy="17" r="7" fill="#0b66c2" /><path d="M18 12v2M18 15.500v6" stroke="#fff" strokeWidth="2" /></svg>
      <svg width="25" height="19" viewBox="0 0 25 19" className="ml-[22px]" fill="none" stroke="#1c1c1c" strokeWidth="1.700"><path d="M1 7c6-8 17-8 23 0M4.500 10.500c4-5.500 12-5.500 16 0M8 14c3-3.500 6-3.500 9 0" /><circle cx="12.500" cy="17" r="1.300" fill="#1c1c1c" /></svg>
      <svg width="25" height="19" viewBox="0 0 25 19" className="ml-[11px]" fill="none" stroke="#1c1c1c" strokeWidth="1.500"><path d="M1 6.500h3.500L9.500 1v17l-5-5.500H1zM13 6c2 2 2 5 0 7M16.500 3.500c3.500 3 3.500 9 0 12M20 1.500c5 5 5 11 0 16" /></svg>
      <svg width="25" height="21" viewBox="0 0 25 21" className="ml-[10px]"><path d="M8 5h12a2 2 0 0 1 2 2v9a2 2 0 0 1-2 2H4a2 2 0 0 1-2-2v-5" fill="none" stroke="#1c1c1c" strokeWidth="1.600" /><path d="M9 8h10v7.500H5V12z" fill="#1c1c1c" /><path d="M23 9v5" stroke="#1c1c1c" strokeWidth="2" /><path d="M5 0L0 7h3l-1 5 6-7H4.500z" fill="#1c1c1c" /></svg>
      <div className="ml-[22px] flex w-[86px] flex-col items-end text-[17px] leading-[24px] text-[#262626]"><T w={43}>13:06</T><T w={84}>8-12-2023</T></div>
      <svg width="20" height="24" viewBox="0 0 20 24" className="ml-[14px]"><path d="M10 0c4 0 7 3 7 8v6l3 5H0l3-5V8c0-5 3-8 7-8zM7 20.500h6c-.5 3.500-5.500 3.500-6 0z" fill="#0050a8" /></svg>
    </div>
  );
}

/* ---------- DECiM window ---------- */
const raised = "border-t-2 border-l-2 border-r-2 border-b-2 border-t-[#fdfdfd] border-l-[#fdfdfd] border-r-[#7c7c7c] border-b-[#7c7c7c] bg-[#f0f0f0]";
const sunken = "border-t border-l border-t-[#8f8f8f] border-l-[#8f8f8f] bg-white";
const Nub = () => <span className="h-[7px] w-[15px] shrink-0 border border-t-[#fff] border-l-[#fff] border-r-[#7c7c7c] border-b-[#7c7c7c] bg-[#f0f0f0]" />;

function Controls() {
  return (
    <div className="flex h-[363px] flex-col bg-[#f0f0f0] text-[12px] leading-[20px] text-black">
      <div className="flex h-[207px] items-start">
        <div className="mt-[65px] ml-[81px] flex w-[91px] flex-col items-center">
          <T w={54}>Parameter</T>
          <div className={"mt-[2px] flex h-[27px] w-[54px] items-center justify-between px-[5px] " + raised}><T w={13}>n0</T><Nub /></div>
          <div className={"mt-[2px] flex h-[26px] w-[91px] items-center justify-center " + raised}><T w={80}>Adjust controls</T></div>
        </div>
        <div className="mt-[78px] ml-[164px] flex w-[70px] flex-col items-center">
          <T w={51}>Response</T>
          <div className={"mt-[2px] flex h-[27px] w-[70px] items-center justify-between px-[5px] " + raised}><T w={29}>linear</T><Nub /></div>
        </div>
        <div className="mt-[84px] ml-[165px] flex w-[124px] flex-col items-center">
          <T w={36}>Limit 1</T>
          <div className={"flex h-[19px] w-[124px] items-center pl-[1px] " + sunken}><T w={6}>0</T></div>
        </div>
        <div className="mt-[75px] ml-[166px] flex w-[400px] flex-col items-start">
          <T w={25} className="ml-[179px] h-[19px]">4783</T>
          <div className="flex h-[17px] w-[400px] items-start border border-t-[#8f8f8f] border-l-[#8f8f8f] border-r-white border-b-white bg-[#c6c6c6] pl-[175px]">
            <div className={"flex h-[16px] w-[31px] justify-center " + raised}><span className="h-full w-[1px] bg-[#8f8f8f]" /></div>
          </div>
          <T w={60} className="mt-[5px] ml-[169px]">n0 = 0.4783</T>
        </div>
        <div className="mt-[84px] ml-[166px] flex w-[124px] flex-col items-center">
          <T w={36}>Limit 2</T>
          <div className={"flex h-[19px] w-[124px] items-center pl-[1px] " + sunken}><T w={6.5}>1</T></div>
        </div>
        <div className="mt-[71px] ml-[163px] flex w-[124px] flex-col items-center">
          <T w={62}>Direct input</T>
          <div className={"flex h-[19px] w-[124px] items-center pl-[12px] " + sunken}><T w={6.5}>1</T></div>
          <div className={"flex h-[26px] w-[28px] items-center justify-center " + raised}><T w={16}>Set</T></div>
        </div>
      </div>
      <div className={"ml-[886px] flex h-[26px] w-[148px] items-center justify-center " + raised}><T w={137}>{"{{R0L0}({(R1)(R2Q0)}{Q1})}"}</T></div>
    </div>
  );
}

function PlotToolbar() {
  return (
    <div className="flex h-[42px] items-center bg-[#f0f0f0] pl-[6px]">
      <svg width="20" height="18" viewBox="0 0 20 18"><path d="M10 0L0 10l1.500 1.500L10 3.500l8.500 8L20 10l-3-3V1.500h-3V4zM3 12l7-6.500L17 12v6h-5v-5H8v5H3z" /></svg>
      <svg width="20" height="20" viewBox="0 0 20 20" className="ml-[8px]"><path d="M9 1L1 10l8 9M2 10h17" fill="none" stroke="#000" strokeWidth="4" /></svg>
      <svg width="20" height="20" viewBox="0 0 20 20" className="ml-[8px]"><path d="M11 1l8 9-8 9M1 10h17" fill="none" stroke="#8c8c8c" strokeWidth="3.600" strokeDasharray="1.500 .7" /></svg>
      <span className="ml-[8px] h-[24px] w-[1px] bg-[#a0a0a0]" />
      <div className="mb-[1px] ml-[4px] flex h-[30px] w-[30px] items-center justify-center border-t border-l border-[#8a8a8a] bg-white">
        <svg width="23" height="23" viewBox="0 0 23 23"><path d="M11.500 2v19M2 11.500h19" stroke="#000" strokeWidth="2.200" /><path d="M11.500 0L16 5.500H7zM11.500 23L16 17.500H7zM0 11.500L5.500 7v9zM23 11.500L17.500 7v9z" /></svg>
      </div>
      <svg width="22" height="22" viewBox="0 0 22 22" className="ml-[4px]"><circle cx="9.500" cy="9" r="7.500" fill="none" stroke="#000" strokeWidth="3" /><path d="M15 15l5.500 6" stroke="#000" strokeWidth="3.600" /></svg>
      <svg width="20" height="19" viewBox="0 0 20 19" className="ml-[8px]"><path d="M0 3h20M0 9.500h20M0 16h20" stroke="#000" strokeWidth="1.800" /><path d="M6 0v6M14 6.500v6M8 13v6" stroke="#000" strokeWidth="3" /></svg>
      <span className="ml-[7px] h-[24px] w-[1px] bg-[#a0a0a0]" />
      <svg width="20" height="20" viewBox="0 0 20 20" className="ml-[9px]" fill="none" stroke="#000" strokeWidth="1.800"><path d="M1 3a2 2 0 0 1 2-2h12l4 4v12a2 2 0 0 1-2 2H1zM5 1v7h9V1M5 19v-7h10v7" /><path d="M10.500 1.500v5" strokeWidth="3" /></svg>
      <T w={57} className="ml-auto mr-[14px] text-[12.500px] text-black">pan/zoom</T>
    </div>
  );
}

function RightTaskbar() {
  return (
    <div className="flex h-[48px] items-center border-t-2 border-[#abaeb3] bg-gradient-to-r from-[#dcdcdb] via-[#d9dce6] to-[#dadfe8]">
      <div className="relative ml-[19px] w-[24px]">
        <Weather s={24} />
        <span className="absolute -top-[9px] left-[11px] flex h-[16px] w-[16px] items-center justify-center rounded-full bg-[#c42b1c] text-[11px] leading-none text-white">1</span>
      </div>
      <div className="ml-[7px] flex w-[60px] flex-col items-start text-[12px] leading-[16px] text-[#444]"><T w={19}>7°C</T><T w={43} className="text-[#6a6a6a]">Bewolkt</T></div>
      <div className="ml-[353px] flex items-center">
        <StartIcon s={24} />
        <div className="ml-[13px] flex h-[32px] w-[218px] items-center rounded-full border border-[#d0d0d0] bg-[#f4f4f4] pl-[10px]">
          <SearchIcon s={15} w={3.2} />
          <T w={46} className="ml-[10px] text-[13.500px] text-[#5c5c5c]">Zoeken</T>
        </div>
        <span className="w-[2px]" />
        {APPS.map(([Icon, state], i) => <TaskSlot key={i} Icon={Icon} state={state} small code={i === 7} />)}
      </div>
      <div className="ml-auto mr-[23px] flex flex-col items-end text-[11.500px] leading-[16px] text-[#5a5a5a]"><T w={29}>13:06</T><T w={56}>8-12-2023</T></div>
    </div>
  );
}

function DecimWindow() {
  return (
    <div className="flex h-[1032px] flex-col overflow-hidden bg-[#f0f0f0] text-black">
      <div className="flex h-[23px] shrink-0 items-center bg-gradient-to-r from-[#f3f3f3] to-[#f0f3f9] text-[12px]">
        <div className="ml-[2px]"><Feather s={15} /></div>
        <T w={36} className="ml-[6px]">DECiM</T>
        <svg width="102" height="12" viewBox="0 0 102 12" className="ml-auto mr-[19px]" fill="none" stroke="#111" strokeWidth="1.100"><path d="M0 6h11M91 1l10 10M101 1L91 11" /><rect x="45" y="3.500" width="7" height="7.500" rx="1" /><path d="M47 1h5.500a2 2 0 0 1 2 2v6" /></svg>
      </div>
      <div className="flex h-[20px] shrink-0 items-center border-b-2 border-[#f0f0f0] bg-white pl-[7px] text-[12px]">
        <T w={19}>File</T><T w={49} className="ml-[13px]">Calculate</T><T w={21} className="ml-[14px]">Plot</T><T w={35} className="ml-[14px]">Circuit</T><T w={38} className="ml-[14px]">History</T><T w={25} className="ml-[14px]">Help</T>
      </div>
      <Charts />
      <PlotToolbar />
      <Controls />
    </div>
  );
}

export default function App() {
  return (
    <div className="flex h-[1080px] w-[3840px] overflow-hidden font-['Open_Sans','Noto_Sans',sans-serif]">
      <div className="relative w-[1920px] shrink-0">
        <MailWindow />
        <Reminder />
        <LeftTaskbar />
      </div>
      <div className="w-[1920px] shrink-0">
        <DecimWindow />
        <RightTaskbar />
      </div>
    </div>
  );
}
